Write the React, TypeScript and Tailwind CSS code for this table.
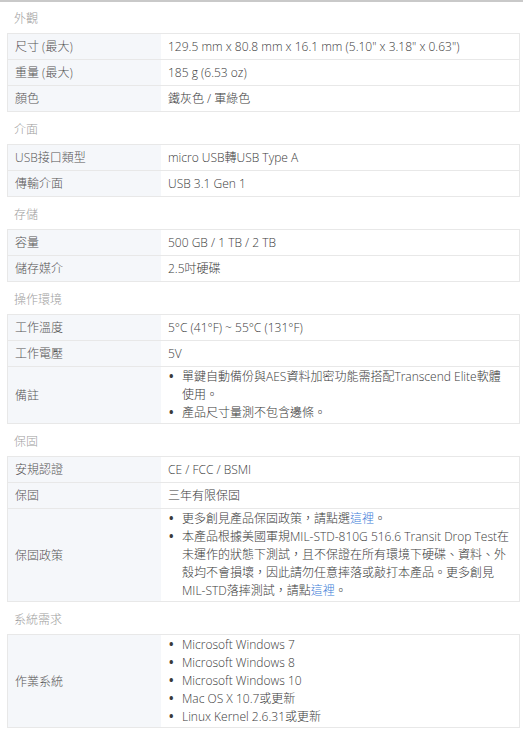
import React from 'react';

type Row = { label: string; value?: string; items?: React.ReactNode[] };
type Section = { title: string; rows: Row[] };

const Link: React.FC<{ children: React.ReactNode }> = ({ children }) => (
  <a href="#" className="text-[#3b7dd8]">{children}</a>
);

const sections: Section[] = [
  {
    title: '外觀',
    rows: [
      { label: '尺寸 (最大)', value: '129.5 mm x 80.8 mm x 16.1 mm (5.10" x 3.18" x 0.63")' },
      { label: '重量 (最大)', value: '185 g (6.53 oz)' },
      { label: '顏色', value: '鐵灰色 / 軍綠色' },
    ],
  },
  {
    title: '介面',
    rows: [
      { label: 'USB接口類型', value: 'micro USB轉USB Type A' },
      { label: '傳輸介面', value: 'USB 3.1 Gen 1' },
    ],
  },
  {
    title: '存儲',
    rows: [
      { label: '容量', value: '500 GB / 1 TB / 2 TB' },
      { label: '儲存媒介', value: '2.5吋硬碟' },
    ],
  },
  {
    title: '操作環境',
    rows: [
      { label: '工作溫度', value: '5°C (41°F) ~ 55°C (131°F)' },
      { label: '工作電壓', value: '5V' },
      {
        label: '備註',
        items: ['單鍵自動備份與AES資料加密功能需搭配Transcend Elite軟體使用。', '產品尺寸量測不包含邊條。'],
      },
    ],
  },
  {
    title: '保固',
    rows: [
      { label: '安規認證', value: 'CE / FCC / BSMI' },
      { label: '保固', value: '三年有限保固' },
      {
        label: '保固政策',
        items: [
          <>更多創見產品保固政策，請點選<Link>這裡</Link>。</>,
          <>
            本產品根據美國軍規MIL-STD-810G 516.6 Transit Drop Test在未運作的狀態下測試，且不保證在所有環境下硬碟、資料、外殼均不會損壞，因此請勿任意摔落或敲打本產品。更多創見MIL-STD落摔測試，請點<Link>這裡</Link>。
          </>,
        ],
      },
    ],
  },
  {
    title: '系統需求',
    rows: [
      {
        label: '作業系統',
        items: [
          'Microsoft Windows 7',
          'Microsoft Windows 8',
          'Microsoft Windows 10',
          'Mac OS X 10.7或更新',
          'Linux Kernel 2.6.31或更新',
        ],
      },
    ],
  },
];

export default function App() {
  return (
    <div
      className="min-h-screen bg-white text-[12px] font-light text-[#3a3a3a]"
      style={{ fontFamily: '"Open Sans", "Noto Sans CJK TC", sans-serif' }}
    >
      <div className="h-[2px] bg-[#c9c9c9]" />
      <div className="ml-[7px] mr-[3px]">
        {sections.map((section, si) => (
          <div key={section.title}>
            <div
              className={`pl-[7px] pb-[6px] leading-[16px] text-[#a0a0a0] ${si === 0 ? 'pt-[9px]' : 'pt-[10px]'}`}
            >
              {section.title}
            </div>
            <div className="border border-[#e8e8e8]">
              {section.rows.map((row, i) => (
                <div
                  key={row.label}
                  className={`grid grid-cols-[153px_1fr] ${i > 0 ? 'border-t border-[#e8e8e8]' : ''}`}
                >
                  <div className="flex items-center bg-[#f5f7fa] px-[7px] py-[4px] leading-[17px] text-[#555]">
                    {row.label}
                  </div>
                  {row.items ? (
                    <div className="px-[7px] py-[1px] leading-[18px]">
                      <ul>
                        {row.items.map((item, j) => (
                          <li key={j} className="flex">
                            <span className="w-[14px] shrink-0 pl-[1px] font-bold">•</span>
                            <span>{item}</span>
                          </li>
                        ))}
                      </ul>
                    </div>
                  ) : (
                    <div className="px-[7px] py-[4px] leading-[17px]">{row.value}</div>
                  )}
                </div>
              ))}
            </div>
          </div>
        ))}
      </div>
    </div>
  );
}
